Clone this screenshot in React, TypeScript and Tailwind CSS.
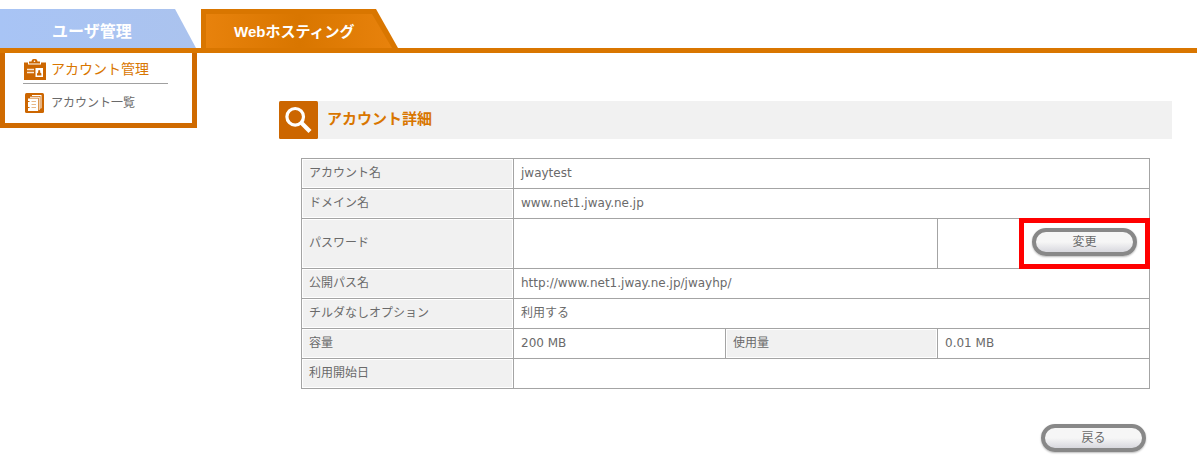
import type { ReactNode } from "react";

const th =
  "h-[30px] border border-[#a4a4a4] bg-[#f1f1f1] px-[7px] pb-px text-left align-middle font-normal shadow-[inset_0_0_0_1px_#fff]";
const td = "h-[30px] border border-[#a4a4a4] px-[7px] pb-px align-middle";

function PillButton({ children }: { children: ReactNode }) {
  return (
    <button
      type="button"
      className="h-[28px] w-[105px] rounded-full border-4 border-[#888888] bg-linear-to-b from-[#f6f6f6] from-50% to-[#d8d8de] pb-px text-[12px] leading-[16px] text-[#6a6a6a] shadow-[0_1px_2px_#bbbbbb]"
    >
      {children}
    </button>
  );
}

function ClipboardIcon() {
  return (
    <svg width="23" height="21" viewBox="0 0 23 21" aria-hidden="true">
      <path d="M1 3.500H5V5.500h13V3.500h5V21H1Z" fill="#cc6600" />
      <path d="M6 2.500h2.500a3 2.600 0 0 1 6 0H17V4.500H6Z" fill="#cc6600" />
      <circle cx="11.500" cy="2.200" r=".8" fill="#fff" />
      <path d="M4 10.500h7M4 13.500h7" stroke="#f8e6d4" strokeWidth="1.400" />
      <rect x="12.500" y="9" width="7.500" height="9" fill="#fff" />
      <path d="M14 16.500v-2l1.200-1v-2q1-1 2 0v2l1.200 1v2Z" fill="#cc6600" />
    </svg>
  );
}

function ListIcon() {
  return (
    <svg width="19" height="20" viewBox="0 0 19 20" aria-hidden="true">
      <rect width="19" height="20" rx="1.500" fill="#cc6600" />
      <path d="M7 2h9.500v13l-1 1V3H7Z" fill="#fff" />
      <path d="M5 3.700h9.700v13l-1 .8V4.700H5Z" fill="#fff" />
      <path d="M3 5.500h10V18H3Z" fill="#fff" />
      <path d="M2.500 8.500h2M2.500 14.500h2" stroke="#cc6600" />
      <path d="M6.500 8.500H11M6.500 11.500H11M6.500 14.500H11" stroke="#e8b888" />
    </svg>
  );
}

function SearchIcon() {
  return (
    <svg className="shrink-0" width="39" height="38" viewBox="0 0 39 38" aria-hidden="true">
      <rect width="39" height="38" rx="1.500" fill="#cc6600" />
      <circle cx="16.200" cy="15.800" r="8.300" fill="none" stroke="#fff" strokeWidth="3.200" />
      <path d="m22.300 21.800 8.700 8.700" stroke="#fff" strokeWidth="4.200" />
    </svg>
  );
}

export default function App() {
  return (
    <div className="bg-white font-['DejaVu_Sans','Noto_Sans_CJK_JP',sans-serif] text-[12px] leading-[18px] text-[#6a6a6a]">
      <nav className="flex gap-[5px] border-b-[5px] border-[#d97600] pt-[9px] font-['Liberation_Sans','Noto_Sans_CJK_JP',sans-serif] font-bold leading-[24px] text-white">
        <a
          href="#users"
          className="h-[39px] w-[196px] bg-linear-to-r from-[#a8c4f5] to-[#abc3ee] pl-[52px] pt-[11px] text-[16px] [clip-path:polygon(0_0,175px_0,100%_100%,0_100%)]"
        >
          ユーザ管理
        </a>
        <a
          href="#hosting"
          className="h-[39px] w-[197px] bg-[#d97600] [clip-path:polygon(0_0,175px_0,100%_100%,0_100%)]"
        >
          <span className="ml-[5px] mt-[5px] block h-[34px] w-[186px] bg-linear-to-r from-[#e8820c] via-[#d97600] to-[#e8820c] pl-[28px] pt-[6px] text-[15px] [clip-path:polygon(0_0,166px_0,100%_100%,0_100%)]">
            Webホスティング
          </span>
        </a>
      </nav>
      <div className="flex items-start">
        <aside className="w-[197px] shrink-0 border-x-[5px] border-b-[5px] border-[#cf6a00] pb-[10px] pl-[18px] pr-[24px] pt-[3px]">
          <a
            href="#accounts"
            className="flex h-[28px] items-center gap-[5px] border-b border-[#a0a0a0] text-[14px] text-[#d97600]"
          >
            <ClipboardIcon />
            <span className="whitespace-nowrap pb-[2px]">アカウント管理</span>
          </a>
          <a href="#account-list" className="mt-[9px] flex items-center gap-[7px] pl-[2px]">
            <ListIcon />
            <span className="pb-px">アカウント一覧</span>
          </a>
        </aside>
        <main className="ml-[82px] mr-[25px] min-w-0 flex-1 pt-[48px]">
          <header className="flex h-[38px] bg-[#f1f1f1]">
            <SearchIcon />
            <h1 className="pl-[9px] pt-[6px] text-[15px] font-bold leading-[24px] text-[#d97600]">
              アカウント詳細
            </h1>
          </header>
          <div className="mx-[22px] mt-[19px]">
            <table className="w-full table-fixed border-collapse">
              <colgroup>
                <col className="w-1/4" />
                <col className="w-1/4" />
                <col className="w-1/4" />
                <col className="w-1/4" />
              </colgroup>
              <tbody>
                <tr>
                  <th scope="row" className={th}>アカウント名</th>
                  <td colSpan={3} className={td}>jwaytest</td>
                </tr>
                <tr>
                  <th scope="row" className={th}>ドメイン名</th>
                  <td colSpan={3} className={td}>www.net1.jway.ne.jp</td>
                </tr>
                <tr>
                  <th scope="row" className={th}>パスワード</th>
                  <td colSpan={2} className={td}></td>
                  <td className="h-[50px] border border-[#a4a4a4] p-0">
                    <div className="relative -my-px -mr-px ml-auto flex h-[51px] w-[131px] items-center justify-center border-[5px] border-[#ff0000] pb-[3px]">
                      <PillButton>変更</PillButton>
                    </div>
                  </td>
                </tr>
                <tr>
                  <th scope="row" className={th}>公開パス名</th>
                  <td colSpan={3} className={td}>http://www.net1.jway.ne.jp/jwayhp/</td>
                </tr>
                <tr>
                  <th scope="row" className={th}>チルダなしオプション</th>
                  <td colSpan={3} className={td}>利用する</td>
                </tr>
                <tr>
                  <th scope="row" className={th}>容量</th>
                  <td className={td}>200 MB</td>
                  <th scope="row" className={th}>使用量</th>
                  <td className={td}>0.01 MB</td>
                </tr>
                <tr>
                  <th scope="row" className={th}>利用開始日</th>
                  <td colSpan={3} className={td}></td>
                </tr>
              </tbody>
            </table>
            <div className="mr-[4px] mt-[35px] flex justify-end pb-[14px]">
              <PillButton>戻る</PillButton>
            </div>
          </div>
        </main>
      </div>
    </div>
  );
}
